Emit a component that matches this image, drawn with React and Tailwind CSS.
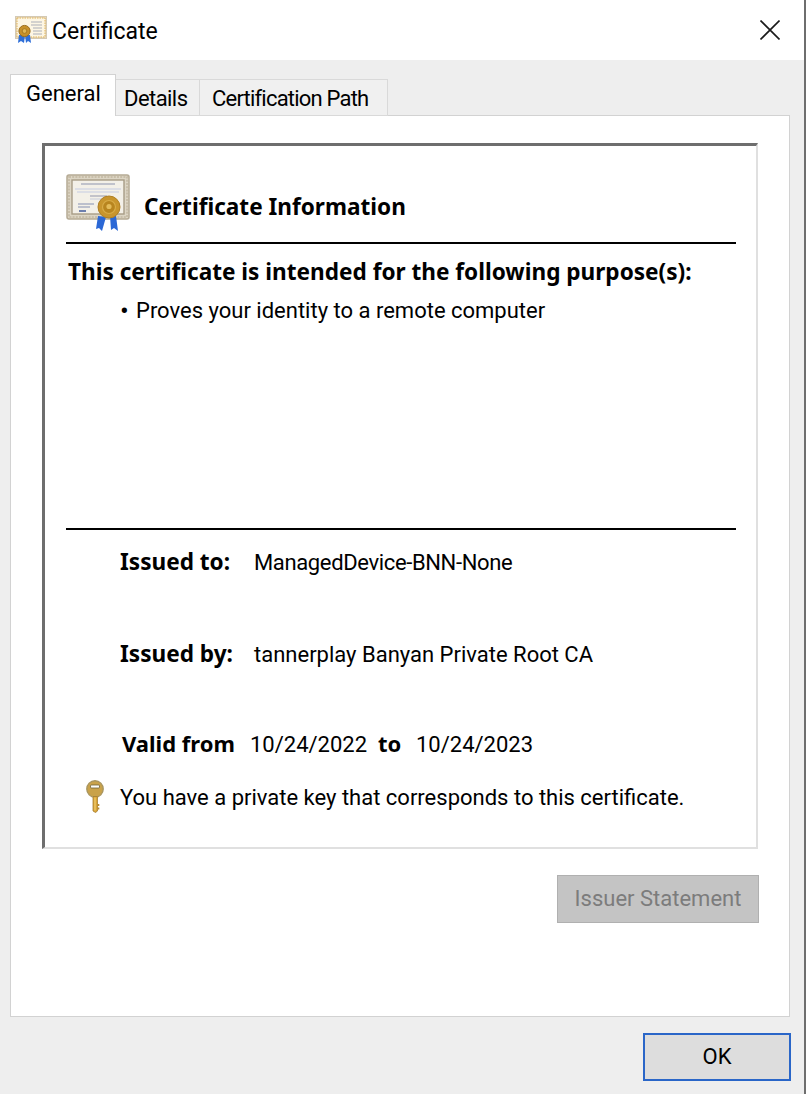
function CertSmall() {
  return (
    <svg width="33" height="28" viewBox="0 0 33 28" className="block">
      <rect x="0.5" y="0.5" width="31" height="22" fill="#e6d7bd" stroke="#d4c9b4" />
      <rect x="2" y="2" width="28" height="19" fill="#fdf6e4" stroke="#e0b458" strokeDasharray="1.5 1" />
      <path d="M16 6h11M16 9h11M18 12h9M18 15h9M18 18h9" stroke="#c6c6c6" strokeWidth="1.3" />
      <path d="M4 19l-1 8 3-2 3 2 1-8zM10 19l1 8 2-2 3 2-1-8z" fill="#2f6fd8" />
      <circle cx="9.5" cy="15" r="5.6" fill="#c8912a" stroke="#9a6d1c" />
      <circle cx="9.5" cy="15" r="2.4" fill="#dfb654" stroke="#a87a22" />
    </svg>
  );
}

function CertLarge() {
  return (
    <svg width="66" height="58" viewBox="0 0 66 58" className="block">
      <rect x="1" y="1" width="62" height="44" rx="2" fill="#dcd5c4" stroke="#b5aa94" strokeWidth="1.5" />
      <rect x="3" y="3" width="58" height="40" fill="none" stroke="#c8bea9" strokeWidth="2" strokeDasharray="2 1.2" />
      <rect x="6" y="6" width="52" height="34" fill="#f3f0e8" stroke="#a79c86" strokeWidth="1.4" />
      <path d="M15 10h34" stroke="#8d93ad" strokeWidth="1.2" />
      <path d="M9 15h46M11 18h42" stroke="#d5d8e4" strokeWidth="1.6" />
      <path d="M24 22h17" stroke="#a3a6b6" strokeWidth="1.2" />
      <path d="M24 25h17" stroke="#cfd2dc" strokeWidth="1.2" />
      <path d="M12 30h16M12 33h12" stroke="#aab0c4" strokeWidth="1.4" />
      <path d="M13 37h7" stroke="#6d7fae" strokeWidth="2" />
      <path d="M32 42l-2 13 3-1 3 3 4-14z" fill="#2b68d6" />
      <path d="M44 42l1 14 3-2 4 3-2-15z" fill="#2b68d6" />
      <circle cx="43" cy="33" r="11" fill="#c8952d" stroke="#b08024" />
      <circle cx="43" cy="33" r="6.500" fill="#b8851f" stroke="#d8ac48" strokeWidth="1.200" />
      <circle cx="43" cy="32.500" r="2.600" fill="#e3bb5a" />
    </svg>
  );
}

function KeyIcon() {
  return (
    <svg width="20" height="33" viewBox="0 0 20 33" className="block">
      <ellipse cx="10" cy="9" rx="8.200" ry="8.300" fill="#c9a24a" stroke="#a9955f" strokeWidth="1.400" />
      <path d="M8 16.500h4.500V31l-2 1.500-2.500-1.500z" fill="#d9a334" stroke="#a47f32" strokeWidth="0.800" />
      <path d="M12.500 24h1.800v2h-1.800zM12.500 27.500h1.800v2h-1.800z" fill="#b98c2e" />
      <rect x="5.500" y="5" width="9" height="3" rx="1" fill="#fdfdf8" stroke="#6f6036" strokeWidth="0.800" />
      <path d="M10 17.500v13" stroke="#f0cf74" strokeWidth="1.200" />
    </svg>
  );
}

function Tab({ children, className }) {
  return (
    <div className={`bg-[#f0f0f0] border border-[#d9d9d9] border-l-0 h-[37px] flex items-center whitespace-nowrap ${className}`}>
      {children}
    </div>
  );
}

const bold = "font-bold text-[22.6px]";
const noto = { fontFamily: '"Noto Sans", sans-serif' };

export default function App() {
  return (
    <div
      className="w-[806px] h-[1094px] overflow-hidden flex bg-white text-black text-[22px] leading-[30px]"
      style={{ fontFamily: 'Roboto, "Noto Sans", sans-serif' }}
    >
      <div className="flex-1 flex flex-col min-w-0">
        <header className="h-[60px] shrink-0 flex items-center pl-[15px] pr-[24px]">
          <CertSmall />
          <span className="ml-[4px] mt-[3px] text-[23px]">Certificate</span>
          <svg width="20" height="20" viewBox="0 0 20 20" className="ml-auto">
            <path d="M0.500 0.500L19.500 19.500M19.500 0.500L0.500 19.500" stroke="#1a1a1a" strokeWidth="1.600" />
          </svg>
        </header>

        <main className="flex-1 bg-[#eeeeee] flex flex-col pl-[10px] pt-[14px]">
          <div className="flex items-end h-[42px] relative z-10">
            <div className="w-[106px] h-[42px] bg-white border border-[#d2d2d2] border-b-0 pl-[15px] pt-[4px] whitespace-nowrap">General</div>
            <Tab className="w-[84px] pl-[8px] pt-[2px] tracking-[-0.55px]">Details</Tab>
            <Tab className="w-[188px] pl-[12px] pt-[2px] tracking-[-0.8px]">Certification Path</Tab>
          </div>

          <section className="-mt-px h-[902px] w-[780px] shrink-0 bg-white border border-[#d2d2d2] pl-[31px] pt-[27px]">
            <div className="w-[716px] h-[706px] border-t-[3px] border-l-[3px] border-r-2 border-b-2 border-t-[#6e6e6e] border-l-[#6e6e6e] border-r-[#e0e0e0] border-b-[#e0e0e0] pl-[21px] pr-[20px]">
              <div className="h-[98px] border-b-2 border-black flex items-start pt-[28px]">
                <CertLarge />
                <h1 className={`ml-[12px] mt-[18px] ${bold}`} style={noto}>Certificate Information</h1>
              </div>

              <div className="h-[286px] border-b-2 border-black pl-[2px] pt-[13px]">
                <p className={bold} style={noto}>This certificate is intended for the following purpose(s):</p>
                <p className="ml-[52px] mt-[9px] flex">
                  <span className="w-[16px] text-[26px]">•</span>
                  <span>Proves your identity to a remote computer</span>
                </p>
              </div>

              <dl className="pl-[54px] pt-[17px]">
                <div className="flex items-baseline h-[92px]">
                  <dt className={`w-[134px] ${bold}`} style={noto}>Issued to:</dt>
                  <dd className="tracking-[-0.36px]">ManagedDevice-BNN-None</dd>
                </div>
                <div className="flex items-baseline h-[89px]">
                  <dt className={`w-[134px] ${bold}`} style={noto}>Issued by:</dt>
                  <dd>tannerplay Banyan Private Root CA</dd>
                </div>
                <div className="flex items-baseline ml-[2px]">
                  <dt className="w-[128px] font-bold" style={noto}>Valid from</dt>
                  <dd className="w-[128px]">10/24/2022</dd>
                  <dt className="w-[38px] font-bold" style={noto}>to</dt>
                  <dd>10/24/2023</dd>
                </div>
              </dl>

              <div className="flex items-start mt-[20px] ml-[19px]">
                <KeyIcon />
                <p className="ml-[15px] mt-[3px]">You have a private key that corresponds to this certificate.</p>
              </div>
            </div>

            <div className="w-[717px] flex justify-end mt-[26px]">
              <button className="w-[202px] h-[48px] bg-[#c4c4c4] border border-[#b0b0b0] text-[#7c7c7c]">Issuer Statement</button>
            </div>
          </section>

          <div className="w-[781px] flex justify-end mt-[16px]">
            <button className="w-[148px] h-[48px] bg-[#dddddd] border-2 border-[#2a66c8]">OK</button>
          </div>
        </main>
      </div>
      <div className="w-[2px] shrink-0 bg-[#6e6e6e]" />
    </div>
  );
}
